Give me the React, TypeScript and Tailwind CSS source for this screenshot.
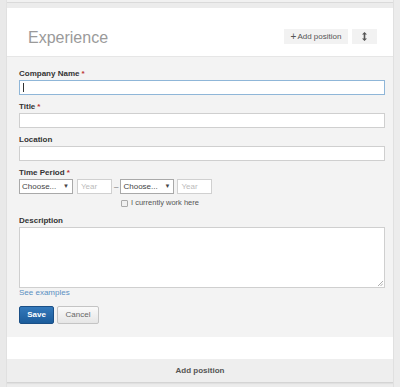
import React from "react";

const font = { fontFamily: '"Liberation Sans", Arial, sans-serif' };

function Label({ text, required }: { text: string; required?: boolean }) {
  return (
    <div className="mb-px h-[10px] text-[8px] font-bold leading-[10px] text-[#333]">
      {text}
      {required && <span className="ml-[2px] text-[#b33]">*</span>}
    </div>
  );
}

function Select() {
  return (
    <div className="flex h-[15px] w-[54px] items-center justify-between border border-[#a9a9a9] bg-white pl-[2px] pr-[3px] text-[8px] text-[#444]">
      <span>Choose...</span>
      <span className="text-[6px]">▼</span>
    </div>
  );
}

function Year() {
  return (
    <div className="flex h-[15px] w-[35px] items-center border border-[#d0d0d0] bg-white pl-[3px] text-[8px] text-[#bbb]">
      Year
    </div>
  );
}

export default function App() {
  return (
    <div className="h-[387px] w-[400px] bg-[#ececec]" style={font}>
      <div className="flex h-full">
        <div className="w-[7px] border-r border-[#e2e2e2] bg-[#e9e9e9]" />
        <div className="w-[386px]">
          <div className="h-[3px] border-b border-[#dadada] bg-[#f1f1f1]" />
          <div className="mt-[5px] border-b border-[#d4d4d4] bg-white shadow-[0_1px_1px_rgba(0,0,0,0.05)]">
            <div className="flex h-[49px] items-end justify-between border-b border-[#e6e6e6] pb-[8px] pl-[21px] pr-[16px]">
              <div className="text-[16px] leading-[20px] text-[#9a9a9a]">Experience</div>
              <div className="mb-[4px] flex gap-[4px]">
                <div className="flex h-[15px] w-[64px] items-center justify-center bg-[#f2f2f2] text-[8px] text-[#555]">
                  <span className="mr-px text-[10px] leading-none">+</span>Add position
                </div>
                <div className="flex h-[15px] w-[25px] items-center justify-center bg-[#f2f2f2]">
                  <svg width="5" height="9" viewBox="0 0 5 9">
                    <path d="M2.5 0 L5 2.5 H3.3 V6.5 H5 L2.5 9 L0 6.5 H1.7 V2.5 H0 Z" fill="#555" />
                  </svg>
                </div>
              </div>
            </div>
            <div className="bg-[#f3f3f3] pb-[13px] pl-[12px] pr-[8px] pt-[12px]">
              <div className="flex flex-col gap-[7px]">
                <div>
                  <Label text="Company Name" required />
                  <div className="flex h-[15px] items-center border border-[#8fb6d8] bg-white pl-[3px]">
                    <div className="h-[9px] w-px bg-[#333]" />
                  </div>
                </div>
                <div>
                  <Label text="Title" required />
                  <div className="h-[15px] border border-[#cfcfcf] bg-white" />
                </div>
                <div>
                  <Label text="Location" />
                  <div className="h-[15px] border border-[#cfcfcf] bg-white" />
                </div>
                <div>
                  <Label text="Time Period" required />
                  <div className="flex items-center">
                    <Select />
                    <div className="ml-[4px]">
                      <Year />
                    </div>
                    <span className="mx-[2px] text-[8px] text-[#666]">–</span>
                    <Select />
                    <div className="ml-[3px]">
                      <Year />
                    </div>
                  </div>
                  <div className="ml-[102px] mt-[4px] flex items-center gap-[3px]">
                    <div className="h-[7px] w-[7px] rounded-[1px] border border-[#aaa] bg-[#f0f0f0]" />
                    <span className="text-[7.5px] leading-[10px] text-[#555]">I currently work here</span>
                  </div>
                </div>
              </div>
              <div className="mt-[8px]">
                <Label text="Description" />
                <div className="relative h-[61px] border border-[#cfcfcf] bg-white">
                  <svg className="absolute bottom-[1px] right-[1px]" width="5" height="5" viewBox="0 0 5 5">
                    <path d="M5 0 L0 5 M5 2.5 L2.5 5" stroke="#999" strokeWidth="0.8" />
                  </svg>
                </div>
              </div>
              <div className="h-[10px] text-[8px] leading-[10px] text-[#5a8fc2]">See examples</div>
              <div className="mt-[8px] flex gap-[3px]">
                <div className="flex h-[18px] w-[35px] items-center justify-center rounded-[2px] border border-[#1a4f86] bg-gradient-to-b from-[#3479bb] to-[#1b5c9b] text-[8px] font-bold text-white">
                  Save
                </div>
                <div className="flex h-[18px] w-[42px] items-center justify-center rounded-[2px] border border-[#c4c4c4] bg-gradient-to-b from-[#fafafa] to-[#e6e6e6] text-[8px] text-[#666]">
                  Cancel
                </div>
              </div>
            </div>
            <div className="h-[22px] bg-white" />
            <div className="flex h-[23px] items-center justify-center bg-[#eeeeee] text-[8px] font-bold text-[#555]">
              Add position
            </div>
          </div>
        </div>
        <div className="w-[7px] border-l border-[#e0e0e0] bg-[#ececec]" />
      </div>
    </div>
  );
}
